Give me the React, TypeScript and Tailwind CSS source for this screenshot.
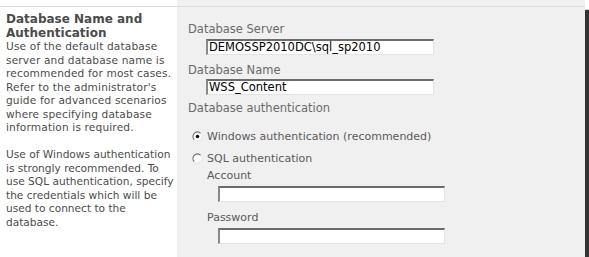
import React from 'react';

const font = { fontFamily: '"DejaVu Sans", Verdana, sans-serif' };

function Radio({ checked }: { checked?: boolean }) {
  return (
    <svg width="11" height="11" viewBox="0 0 11 11" className="shrink-0">
      <circle cx="5.5" cy="5.5" r="4.5" fill="#fff" />
      <path d="M8.7 2.3 A4.5 4.5 0 0 0 2.3 8.7" fill="none" stroke="#6e6e6e" strokeWidth="1.2" />
      <path d="M2.3 8.7 A4.5 4.5 0 0 0 8.7 2.3" fill="none" stroke="#e8e8e8" strokeWidth="1.2" />
      {checked && <circle cx="5.5" cy="5.5" r="1.8" fill="#111" />}
    </svg>
  );
}

function TextBox({ value, className }: { value?: string; className: string }) {
  return (
    <div
      className={`h-[16px] bg-white border-t-2 border-l-2 border-b border-r border-t-[#6b6b6b] border-l-[#8a8a8a] border-b-[#e3e3e3] border-r-[#e3e3e3] pl-[1px] text-[11.5px] leading-[13px] text-black ${className}`}
    >
      {value}
    </div>
  );
}

const leftLines1 = [
  'Use of the default database',
  'server and database name is',
  'recommended for most cases.',
  "Refer to the administrator's",
  'guide for advanced scenarios',
  'where specifying database',
  'information is required.',
];

const leftLines2 = [
  'Use of Windows authentication',
  'is strongly recommended. To',
  'use SQL authentication, specify',
  'the credentials which will be',
  'used to connect to the',
  'database.',
];

export default function App() {
  return (
    <div className="w-[589px] h-[257px] bg-white overflow-hidden" style={font}>
      <div className="w-[585px] h-[252px] flex border-t border-[#dcdcdc] mt-[6px] relative shadow-[4px_4px_1px_rgba(0,0,0,0.8)]">
        <div className="absolute left-0 right-0 -top-[7px] h-[6px] flex">
          <div className="w-[177px] bg-white" />
          <div className="flex-1 bg-[#f0f0f0]" />
        </div>
        <div className="w-[177px] bg-white pl-[6px] pt-[6px] text-[10.6px] leading-[13.5px] text-[#4c4c4c]">
          <div className="font-bold text-[12px]">
            <div>Database Name and</div>
            <div>Authentication</div>
          </div>
          {leftLines1.map((l) => (
            <div key={l} className="whitespace-nowrap tracking-[0.15px]">{l}</div>
          ))}
          <div className="h-[13.5px]" />
          {leftLines2.map((l) => (
            <div key={l} className="whitespace-nowrap">{l}</div>
          ))}
        </div>
        <div className="flex-1 bg-[#f0f0f0] pl-[11px] pt-[16px] text-[11.5px] leading-[13.5px] text-[#6a6a6a]">
          <div>Database Server</div>
          <TextBox value="DEMOSSP2010DC\sql_sp2010" className="ml-[18px] w-[228px] mt-[2px]" />
          <div className="mt-[9px]">Database Name</div>
          <TextBox value="WSS_Content" className="ml-[18px] w-[228px] mt-[2px]" />
          <div className="mt-[7px]">Database authentication</div>
          <div className="flex items-center gap-[4px] ml-[4px] mt-[14px] text-[11px]">
            <Radio checked />
            <span className="text-[#5a5a5a]">Windows authentication (recommended)</span>
          </div>
          <div className="flex items-center gap-[4px] ml-[4px] mt-[9px] text-[11px]">
            <Radio />
            <span className="text-[#5a5a5a]">SQL authentication</span>
          </div>
          <div className="ml-[19px] mt-[3px] text-[#5a5a5a] text-[11px]">Account</div>
          <TextBox className="ml-[30px] w-[227px] mt-[4px]" />
          <div className="ml-[19px] mt-[9px] text-[#5a5a5a] text-[11px]">Password</div>
          <TextBox className="ml-[30px] w-[227px] mt-[3px]" />
        </div>
      </div>
    </div>
  );
}
